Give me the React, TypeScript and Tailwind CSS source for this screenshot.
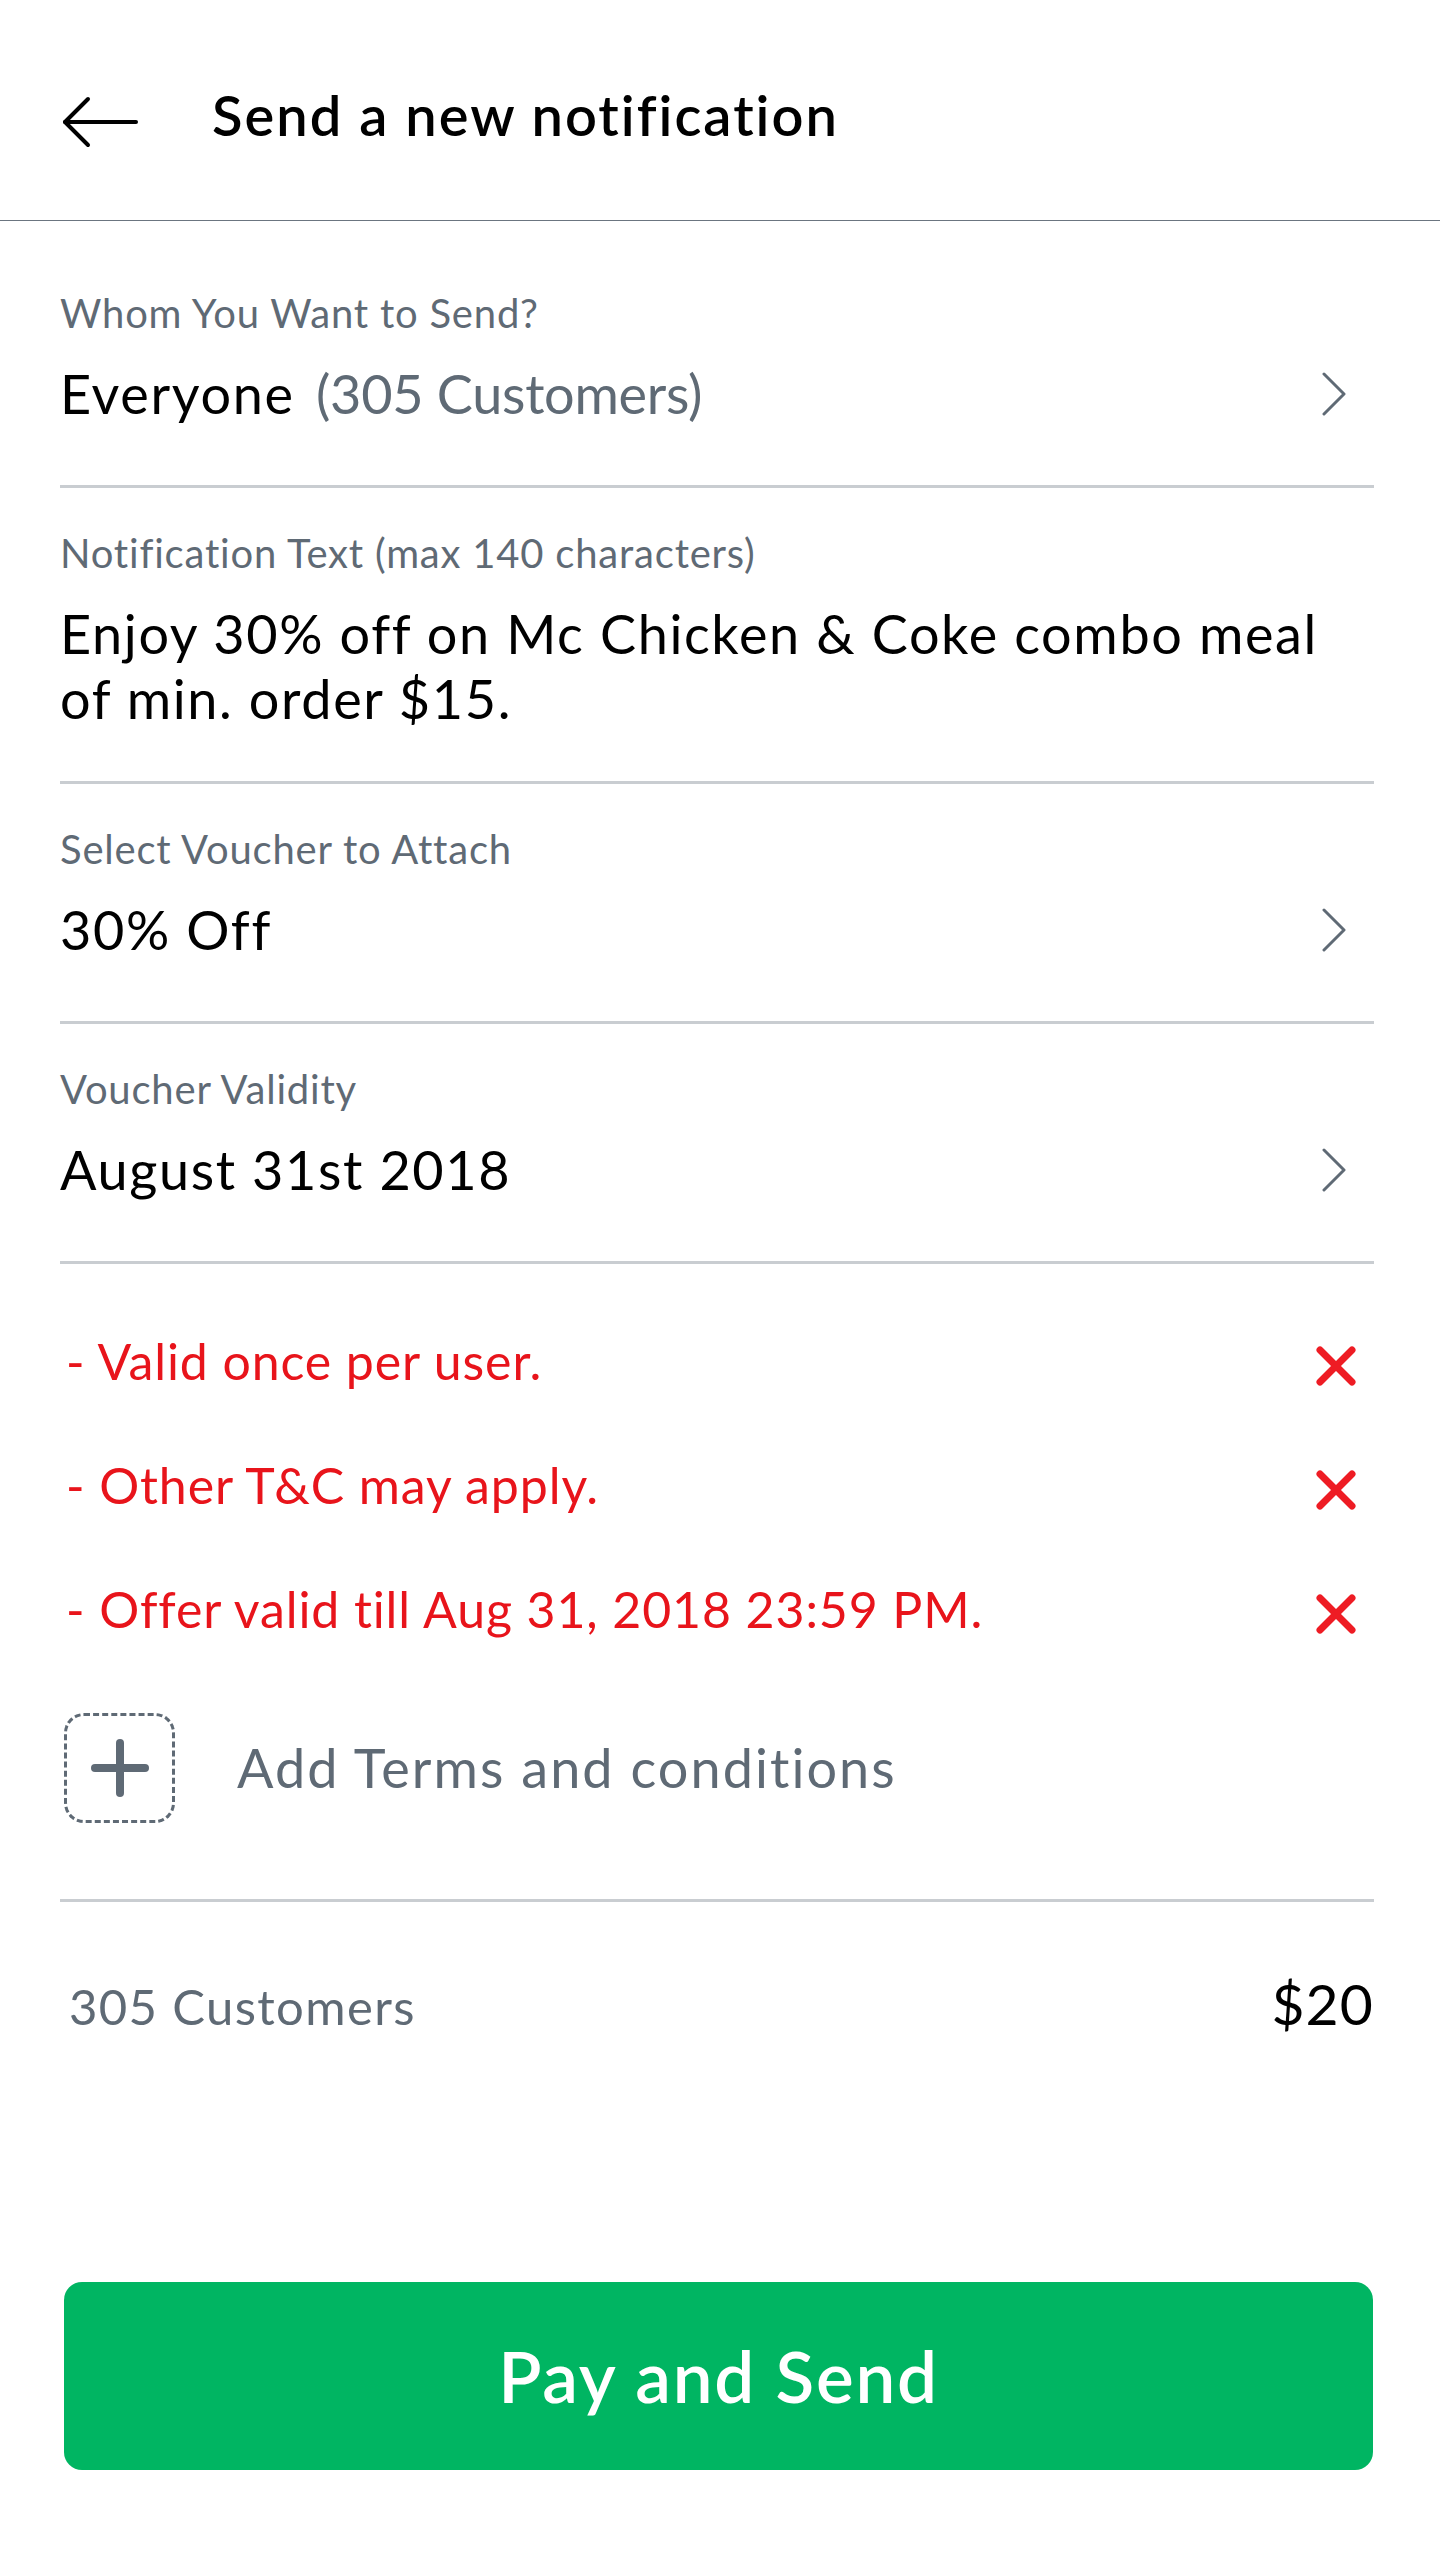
import React from 'react'

const gray = 'text-[#5f6a75]'

function BackArrow() {
  return (
    <svg width="76" height="52" viewBox="0 0 76 52" fill="none" stroke="#000" strokeWidth="4" strokeLinecap="round" strokeLinejoin="round">
      <path d="M26 3 L3 26 L26 49" />
      <path d="M3 26 H74" />
    </svg>
  )
}

function Chevron() {
  return (
    <svg width="26" height="44" viewBox="0 0 26 44" fill="none" stroke="#5f6a75" strokeWidth="3" strokeLinecap="round" strokeLinejoin="round">
      <path d="M3 2 L23 22 L3 42" />
    </svg>
  )
}

function RedX() {
  return (
    <svg width="42" height="40" viewBox="0 0 42 40" fill="none" stroke="#ee1c24" strokeWidth="7" strokeLinecap="round">
      <path d="M5 4 L37 36" />
      <path d="M37 4 L5 36" />
    </svg>
  )
}

function Divider() {
  return <div className="h-[3px] bg-[#c9cdd1] ml-[60px] mr-[66px]" />
}

function Field({ label, children, chevron = true, first = false }: { label: string; children: React.ReactNode; chevron?: boolean; first?: boolean }) {
  return (
    <div className={`${first ? 'pt-[72px]' : 'pt-[45px]'} pb-[64px] pl-[60px] pr-[93px]`}>
      <div className={`text-[40px] leading-[40px] tracking-[0.02em] ${gray}`}>{label}</div>
      <div className="mt-[34px] flex items-center justify-between">
        <div className="text-[54px] leading-[54px] tracking-[0.03em] text-black">{children}</div>
        {chevron && <Chevron />}
      </div>
    </div>
  )
}

const terms = [
  '- Valid once per user.',
  '- Other T&C may apply.',
  '- Offer valid till Aug 31, 2018 23:59 PM.',
]

export default function App() {
  return (
    <div className="w-[1440px] bg-white font-['Lato',sans-serif]">
      <div className="h-[221px] border-b border-[#6b7580] flex items-start">
        <div className="mt-[96px] ml-[62px]">
          <BackArrow />
        </div>
        <h1 className="mt-[87px] ml-[74px] text-[56px] leading-[56px] tracking-[0.036em] font-semibold text-black">
          Send a new notification
        </h1>
      </div>

      <Field label="Whom You Want to Send?" first>
        Everyone <span className={`ml-[6px] tracking-[-0.005em] ${gray}`}>(305 Customers)</span>
      </Field>
      <Divider />

      <div className="pt-[45px] pb-[50px] pl-[60px] pr-[66px]">
        <div className={`text-[40px] leading-[40px] tracking-[0.02em] ${gray}`}>Notification Text (max 140 characters)</div>
        <div className="mt-[28px] text-[54px] leading-[65px] tracking-[0.03em] text-black">
          Enjoy 30% off on Mc Chicken &amp; Coke combo meal
          <br />
          of min. order $15.
        </div>
      </div>
      <Divider />

      <Field label="Select Voucher to Attach">30% Off</Field>
      <Divider />

      <Field label="Voucher Validity">August 31st 2018</Field>
      <Divider />

      <div className="pt-[72px] pl-[66px] pr-[83px] flex flex-col gap-[74px]">
        {terms.map((t) => (
          <div key={t} className="flex items-start justify-between">
            <div className="text-[50px] leading-[50px] tracking-[0.018em] text-[#e8141b]">{t}</div>
            <div className="mt-[10px]">
              <RedX />
            </div>
          </div>
        ))}
      </div>

      <div className="mt-[79px] pl-[64px] pb-[76px] flex items-center">
        <div className="w-[111px] h-[110px] rounded-[20px] border-[3px] border-dashed border-[#5f6a75] flex items-center justify-center">
          <svg width="58" height="58" viewBox="0 0 58 58" fill="none" stroke="#5f6a75" strokeWidth="8" strokeLinecap="round">
            <path d="M29 4 V54" />
            <path d="M4 29 H54" />
          </svg>
        </div>
        <div className={`ml-[62px] text-[54px] leading-[54px] tracking-[0.038em] ${gray}`}>Add Terms and conditions</div>
      </div>
      <Divider />

      <div className="pt-[73px] pl-[69px] pr-[66px] flex items-baseline justify-between">
        <div className={`text-[49px] leading-[49px] tracking-[0.028em] ${gray}`}>305 Customers</div>
        <div className="text-[57px] leading-[57px] tracking-[0.02em] text-black">$20</div>
      </div>

      <div className="mt-[250px] ml-[64px] mr-[67px]">
        <button className="w-full h-[188px] rounded-[18px] bg-[#00b562] text-white text-[71px] tracking-[0.025em] font-semibold flex items-center justify-center">
          Pay and Send
        </button>
      </div>
    </div>
  )
}
